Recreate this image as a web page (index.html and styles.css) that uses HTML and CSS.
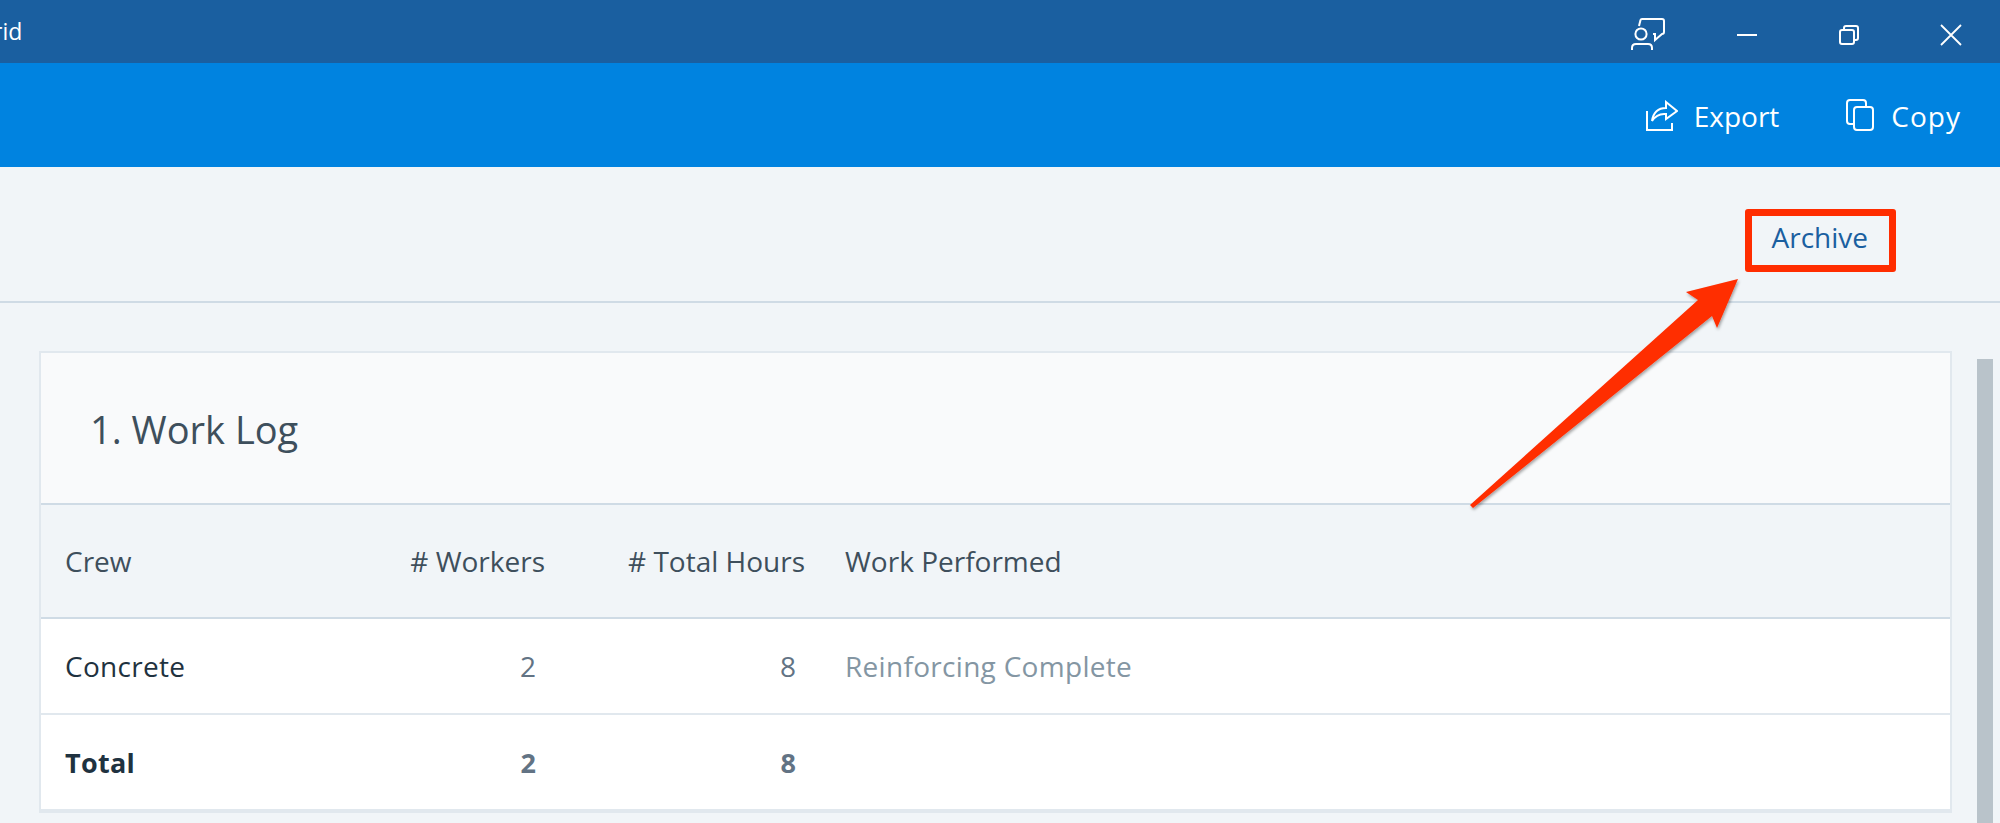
FILE: index.html
```html
<!DOCTYPE html>
<html lang="en">
<head>
    <meta charset="UTF-8">
    <meta name="viewport" content="width=device-width, initial-scale=1.0">
    <title>Daily Log</title>
    <link rel="stylesheet" href="styles.css">
</head>
<body>
    <header class="title-bar">
        <span class="app-name">rid</span>
        <div class="window-controls">
            <svg class="icon-feedback" width="36" height="36" viewBox="0 0 36 36" fill="none" stroke="#fff" stroke-width="2">
                <path d="M8 9 L9.5 3 Q9.8 2 11 2 H31 Q33 2 33 4 V15 Q33 17 31 17 L24 23 V17 H22"/>
                <circle cx="10" cy="17" r="5.6"/>
                <path d="M1 33 V31 Q1 27 5 27 H17 Q21 27 21 31 V33"/>
            </svg>
            <svg class="icon-min" width="20" height="2" viewBox="0 0 20 2"><rect width="20" height="2" fill="#fff"/></svg>
            <svg class="icon-restore" width="20" height="20" viewBox="0 0 20 20" fill="none" stroke="#fff" stroke-width="2">
                <rect x="1" y="5" width="14" height="14" rx="2"/>
                <path d="M5 5 V3 Q5 1 7 1 H17 Q19 1 19 3 V13 Q19 15 17 15 H15"/>
            </svg>
            <svg class="icon-close" width="22" height="22" viewBox="0 0 22 22" stroke="#fff" stroke-width="1.8">
                <path d="M1 1 L21 21 M21 1 L1 21"/>
            </svg>
        </div>
    </header>

    <div class="toolbar">
        <button class="tool-btn export-btn">
            <svg width="32" height="31" viewBox="0 0 32 31" fill="none" stroke="#fff" stroke-width="2">
                <path d="M1 11 V30 H26 V23"/>
                <path d="M20 2 L31 11 L20 19 V14 Q11 13 6 21 Q8 8 20 8 Z"/>
            </svg>
            <span class="tool-label">Export</span>
        </button>
        <button class="tool-btn copy-btn">
            <svg width="28" height="32" viewBox="0 0 28 32" fill="none" stroke="#fff" stroke-width="2">
                <path d="M7 25 H4 Q1 25 1 22 V4 Q1 1 4 1 H17 Q20 1 20 4 V8"/>
                <rect x="8" y="8" width="19" height="23" rx="3"/>
            </svg>
            <span class="tool-label">Copy</span>
        </button>
    </div>

    <div class="sub-header">
        <a class="archive-link" href="#">Archive</a>
    </div>

    <main class="content">
        <section class="card">
            <h2 class="card-title">1. Work Log</h2>
            <table class="log-table">
                <colgroup>
                    <col class="col-crew">
                    <col class="col-workers">
                    <col class="col-hours">
                    <col>
                </colgroup>
                <thead>
                    <tr>
                        <th>Crew</th>
                        <th class="num">#&nbsp;Workers</th>
                        <th class="num">#&nbsp;Total Hours</th>
                        <th class="work">Work Performed</th>
                    </tr>
                </thead>
                <tbody>
                    <tr>
                        <td class="crew">Concrete</td>
                        <td class="num">2</td>
                        <td class="num">8</td>
                        <td class="work muted">Reinforcing Complete</td>
                    </tr>
                    <tr class="total-row">
                        <td class="crew">Total</td>
                        <td class="num">2</td>
                        <td class="num">8</td>
                        <td class="work"></td>
                    </tr>
                </tbody>
            </table>
        </section>
        <div class="scroll-thumb"></div>
    </main>

    <!-- red annotation over the screenshot -->
    <div class="callout-box"></div>
    <svg class="callout-arrow" width="2000" height="823" viewBox="0 0 2000 823">
        <defs>
            <filter id="arrow-shadow" x="-10%" y="-10%" width="120%" height="120%">
                <feDropShadow dx="1" dy="2" stdDeviation="1.5" flood-color="#000" flood-opacity="0.35"/>
            </filter>
        </defs>
        <path d="M1738 279 L1717 328 L1712 316 L1473 508 L1470 505 L1698 300 L1686 292 Z" fill="#ff2d00" filter="url(#arrow-shadow)"/>
    </svg>
</body>
</html>
```

FILE: styles.css
```css
html, body {
    margin: 0;
    height: 823px;
    overflow: hidden;
}

body {
    font-family: "Open Sans", "Noto Sans", sans-serif;
    background: #f1f5f8;
    color: #3e4f5c;
    position: relative;
}

.title-bar {
    height: 63px;
    background: #1a5fa0;
    color: #fff;
    display: flex;
    align-items: center;
    justify-content: space-between;
}

.app-name {
    font-size: 23px;
    margin-left: -7px;
    margin-top: -1px;
}

.window-controls {
    display: flex;
    align-items: center;
    margin-right: 38px;
}

.icon-feedback {
    margin-top: 6px;
}

.icon-min {
    margin-left: 70px;
    margin-top: 7px;
}

.icon-restore {
    margin-left: 82px;
    margin-top: 7px;
}

.icon-close {
    margin-left: 81px;
    margin-top: 7px;
}

.toolbar {
    height: 104px;
    background: #0083e0;
    display: flex;
    align-items: center;
    justify-content: flex-end;
    padding-right: 39px;
}

.tool-btn {
    display: flex;
    align-items: center;
    background: none;
    border: none;
    padding: 0;
    color: #fff;
    font-family: inherit;
    font-size: 28px;
}

.tool-label {
    margin-top: 2px;
}

.export-btn svg {
    margin-right: 16px;
}

.copy-btn {
    margin-left: 67px;
}

.copy-btn svg {
    margin-right: 17px;
}

.copy-btn .tool-label {
    letter-spacing: 1px;
}

.sub-header {
    height: 134px;
    border-bottom: 2px solid #cfdbe5;
    display: flex;
    justify-content: flex-end;
    align-items: flex-start;
    padding-right: 132px;
}

.archive-link {
    margin-top: 51px;
    color: #1a5fa0;
    font-size: 28px;
    text-decoration: none;
}

.content {
    display: flex;
    align-items: flex-start;
    padding: 48px 7px 0 39px;
}

.card {
    width: 1911px;
    border: 2px solid #e1e8ee;
    border-bottom-width: 4px;
    background: #fff;
}

.card-title {
    margin: 0;
    height: 150px;
    line-height: 152px;
    padding-left: 49px;
    background: #f9fafb;
    font-size: 38px;
    font-weight: 400;
    color: #3e4f5c;
}

.log-table {
    width: 100%;
    table-layout: fixed;
    border-collapse: collapse;
    font-size: 28px;
}

.col-crew {
    width: 290px;
}

.col-workers {
    width: 224px;
}

.col-hours {
    width: 260px;
}

.log-table th {
    height: 112px;
    padding: 0 10px 0 24px;
    border-top: 2px solid #cfdbe5;
    border-bottom: 2px solid #cfdbe5;
    background: #f1f5f8;
    font-weight: 400;
    text-align: left;
    color: #3e4f5c;
    white-space: nowrap;
}

.log-table th.num {
    text-align: right;
    padding-left: 0;
}

.log-table th.work {
    padding-left: 30px;
}

.log-table td {
    height: 94px;
    padding: 0 19px 0 24px;
    border-bottom: 2px solid #e1e8ee;
}

.log-table tr:last-child td {
    border-bottom: none;
}

.log-table td.crew {
    color: #1f3240;
    letter-spacing: 0.3px;
}

.log-table td.num {
    text-align: right;
    color: #627384;
    padding-left: 0;
}

.log-table td.work {
    padding-left: 30px;
}

.muted {
    color: #8496a3;
    letter-spacing: 0.3px;
}

.total-row td {
    font-weight: 700;
    font-size: 27px;
}

.scroll-thumb {
    width: 16px;
    height: 470px;
    margin-top: 8px;
    margin-left: 25px;
    background: #b9c3ca;
}

.callout-box {
    position: absolute;
    left: 1745px;
    top: 209px;
    width: 137px;
    height: 49px;
    border: 7px solid #ff2d00;
    border-radius: 3px;
}

.callout-arrow {
    position: absolute;
    left: 0;
    top: 0;
    pointer-events: none;
}
```
